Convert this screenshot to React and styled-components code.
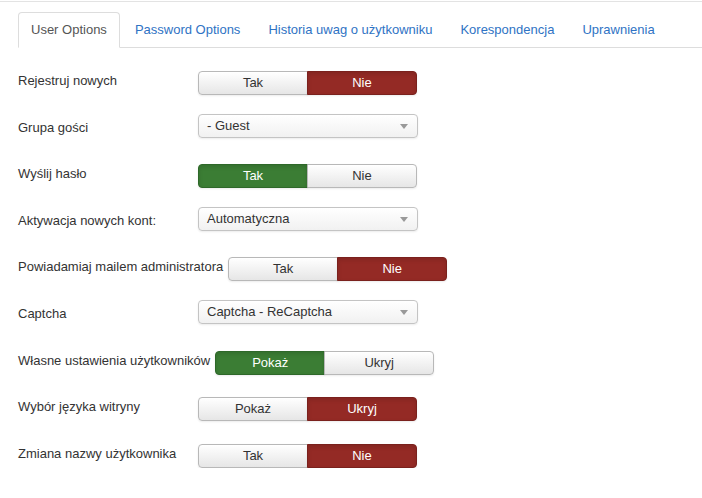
import React from "react";
import styled, { createGlobalStyle } from "styled-components";

const GlobalStyle = createGlobalStyle`
  body {
    margin: 0;
    background: #fff;
    font-family: "Liberation Sans", Arial, sans-serif;
    font-size: 13px;
    color: #333;
  }
`;

const TopRule = styled.div`
  margin-top: 1px;
  height: 1px;
  background: #e3e3e3;
`;

const Page = styled.div`
  padding: 10px 0 0 18px;
`;

const TabBar = styled.ul`
  display: flex;
  margin: 0;
  padding: 0;
  list-style: none;
  border-bottom: 1px solid #ddd;
`;

const Tab = styled.li`
  margin: 0 2px -1px 0;
  padding: 8px 12px;
  line-height: 18px;
  border: 1px solid ${(p) => (p.$active ? "#ddd" : "transparent")};
  border-bottom-color: ${(p) => (p.$active ? "#fff" : "transparent")};
  border-radius: 4px 4px 0 0;
  background: ${(p) => (p.$active ? "#fff" : "transparent")};
  color: ${(p) => (p.$active ? "#555" : "#2f73c4")};
  white-space: nowrap;
`;

const Form = styled.div`
  display: flex;
  flex-direction: column;
  gap: 18.6px;
  padding-top: 19px;
`;

const Row = styled.div`
  display: flex;
  align-items: flex-start;
  height: 28px;
`;

const Label = styled.div`
  box-sizing: border-box;
  min-width: 180px;
  padding: 5px 5px 0 0;
  line-height: 18px;
  white-space: nowrap;
`;

const Group = styled.div`
  display: flex;
  margin-top: 4px;
`;

const tone = {
  off: {
    bg: "linear-gradient(#ffffff, #e6e6e6)",
    border: "#b8b8b8",
    color: "#333",
  },
  no: {
    bg: "#942a25",
    border: "#7a211d",
    color: "#fff",
  },
  yes: {
    bg: "#3b7d34",
    border: "#2e6829",
    color: "#fff",
  },
};

const Btn = styled.div`
  box-sizing: border-box;
  width: 110px;
  height: 24px;
  line-height: 22px;
  text-align: center;
  background: ${(p) => tone[p.$tone].bg};
  border: 1px solid ${(p) => tone[p.$tone].border};
  color: ${(p) => tone[p.$tone].color};
  box-shadow: ${(p) =>
    p.$tone === "off"
      ? "inset 0 1px 0 rgba(255,255,255,.6), 0 1px 2px rgba(0,0,0,.08)"
      : "inset 0 2px 4px rgba(0,0,0,.12), 0 1px 2px rgba(0,0,0,.08)"};

  &:first-child {
    border-radius: 4px 0 0 4px;
  }
  &:last-child {
    margin-left: -1px;
    border-radius: 0 4px 4px 0;
  }
`;

const Select = styled.div`
  position: relative;
  box-sizing: border-box;
  width: 220px;
  height: 24px;
  padding-left: 8px;
  line-height: 22px;
  border: 1px solid #c4c4c4;
  border-radius: 4px;
  background: linear-gradient(#ffffff, #f1f1f1);
  box-shadow: 0 1px 2px rgba(0, 0, 0, 0.08);

  &::after {
    content: "";
    position: absolute;
    right: 9px;
    top: 9px;
    border-left: 4px solid transparent;
    border-right: 4px solid transparent;
    border-top: 5px solid #999;
  }
`;

const tabs = [
  "User Options",
  "Password Options",
  "Historia uwag o użytkowniku",
  "Korespondencja",
  "Uprawnienia",
];

const rows = [
  { label: "Rejestruj nowych", opts: ["Tak", "Nie"], on: 1 },
  { label: "Grupa gości", select: "- Guest" },
  { label: "Wyślij hasło", opts: ["Tak", "Nie"], on: 0 },
  { label: "Aktywacja nowych kont:", select: "Automatyczna" },
  { label: "Powiadamiaj mailem administratora", opts: ["Tak", "Nie"], on: 1 },
  { label: "Captcha", select: "Captcha - ReCaptcha" },
  { label: "Własne ustawienia użytkowników", opts: ["Pokaż", "Ukryj"], on: 0 },
  { label: "Wybór języka witryny", opts: ["Pokaż", "Ukryj"], on: 1 },
  { label: "Zmiana nazwy użytkownika", opts: ["Tak", "Nie"], on: 1 },
];

export default function App() {
  return (
    <>
      <GlobalStyle />
      <TopRule />
      <Page>
        <TabBar>
          {tabs.map((t, i) => (
            <Tab key={t} $active={i === 0}>
              {t}
            </Tab>
          ))}
        </TabBar>
        <Form>
          {rows.map((r) => (
            <Row key={r.label}>
              <Label>{r.label}</Label>
              {r.select ? (
                <Select>{r.select}</Select>
              ) : (
                <Group>
                  {r.opts.map((o, i) => (
                    <Btn
                      key={o}
                      $tone={i !== r.on ? "off" : i === 0 ? "yes" : "no"}
                    >
                      {o}
                    </Btn>
                  ))}
                </Group>
              )}
            </Row>
          ))}
        </Form>
      </Page>
    </>
  );
}
